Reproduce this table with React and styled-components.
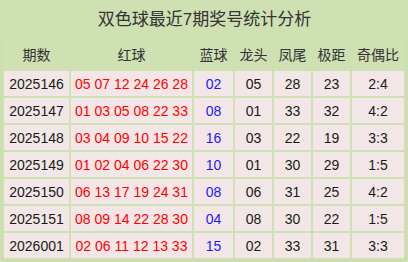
import React from 'react';
import styled, { createGlobalStyle } from 'styled-components';

const rows = [
   { issue: '2025146', red: '05 07 12 24 26 28', blue: '02', head: '05', tail: '28', span: '23', ratio: '2:4' },
   { issue: '2025147', red: '01 03 05 08 22 33', blue: '08', head: '01', tail: '33', span: '32', ratio: '4:2' },
   { issue: '2025148', red: '03 04 09 10 15 22', blue: '16', head: '03', tail: '22', span: '19', ratio: '3:3' },
   { issue: '2025149', red: '01 02 04 06 22 30', blue: '10', head: '01', tail: '30', span: '29', ratio: '1:5' },
   { issue: '2025150', red: '06 13 17 19 24 31', blue: '08', head: '06', tail: '31', span: '25', ratio: '4:2' },
   { issue: '2025151', red: '08 09 14 22 28 30', blue: '04', head: '08', tail: '30', span: '22', ratio: '1:5' },
   { issue: '2026001', red: '02 06 11 12 13 33', blue: '15', head: '02', tail: '33', span: '31', ratio: '3:3' },
];

const headers = [
   { label: '期数', width: 65 },
   { label: '红球', width: 121 },
   { label: '蓝球', width: 39 },
   { label: '龙头', width: 37 },
   { label: '凤尾', width: 37 },
   { label: '极距', width: 37 },
   { label: '奇偶比', width: 52 },
];

const App = () => {
  return (
    <Page>
      <GlobalStyle />
      <Title>双色球最近7期奖号统计分析</Title>
      <Table>
        <colgroup>
          {headers.map(h => <col key={h.label} width={h.width} />)}
        </colgroup>
        <thead>
          <tr>
            {headers.map(h => <HeadCell key={h.label}>{h.label}</HeadCell>)}
          </tr>
        </thead>
        <tbody>
          {rows.map(r => (
            <tr key={r.issue}>
              <Cell>{r.issue}</Cell>
              <Cell $tone="red">{r.red}</Cell>
              <Cell $tone="blue">{r.blue}</Cell>
              <Cell>{r.head}</Cell>
              <Cell>{r.tail}</Cell>
              <Cell>{r.span}</Cell>
              <Cell>{r.ratio}</Cell>
            </tr>
          ))}
        </tbody>
      </Table>
    </Page>
  );
}

export default App;

const GlobalStyle = createGlobalStyle`
   html, body{
      margin: 0;
      padding: 0;
      background-color: #cfe0b2;
   }
`

const Page = styled.div`
   width: 408px;
   height: 262px;
   background-color: #cfe0b2;
   font-family: "Liberation Sans", "Noto Sans CJK SC", sans-serif;
   color: #222;
   overflow: hidden;
   padding-left: 1px;
   box-sizing: border-box;
`

const Title = styled.div`
   height: 41px;
   line-height: 40px;
   text-align: center;
   font-size: 17px;
   color: #333;
`

const Table = styled.table`
   border-collapse: separate;
   border-spacing: 2px;
   border: 1px solid #c9dcab;
   border-top: none;
   table-layout: fixed;
   font-size: 14px;
`

const HeadCell = styled.th`
   height: 21px;
   padding: 0 0 5px;
   font-weight: normal;
   color: #333;
   text-align: center;
   vertical-align: middle;
`

const toneColor = {
   red: '#ff0000',
   blue: '#1a1aff',
}

const Cell = styled.td`
   height: 25px;
   padding: 0;
   background-color: #f2e6e6;
   text-align: center;
   vertical-align: middle;
   white-space: nowrap;
   color: ${p => toneColor[p.$tone] || '#1a1a1a'};
`
